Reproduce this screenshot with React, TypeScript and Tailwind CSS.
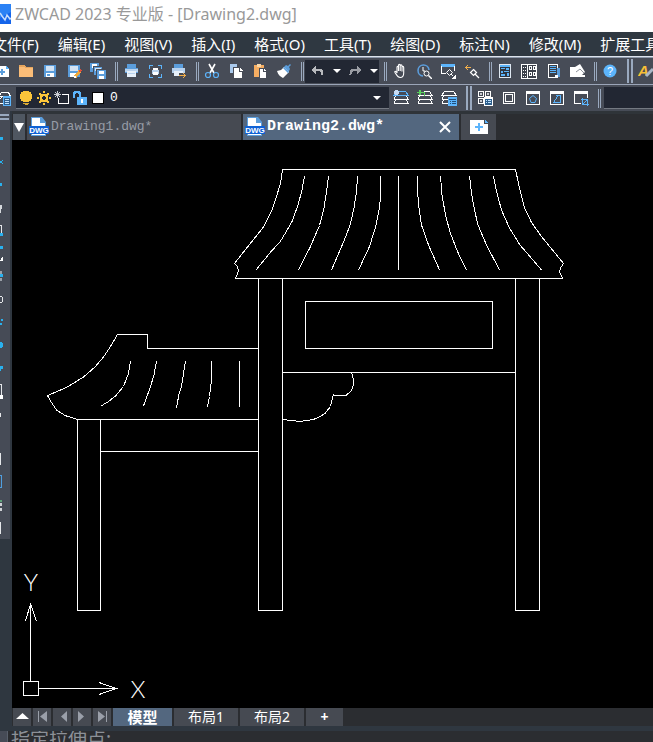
import type { ReactNode } from 'react'

const MENUS = ['文件(F)', '编辑(E)', '视图(V)', '插入(I)', '格式(O)', '工具(T)', '绘图(D)', '标注(N)', '修改(M)', '扩展工具(X)']

const BLUE = '#5b9ddb'
const SKY = '#5cb4fb'

const ICONS: Record<string, ReactNode> = {
  new: (
    <>
      <path d="M4 3h8v3h3v8H4z" fill="#fff" />
      <path d="M12 3l3 3h-3z" fill={SKY} />
      <path d="M8 6v6M5 9h6" stroke={BLUE} strokeWidth="2" />
    </>
  ),
  open: (
    <>
      <path d="M1 2h5l2 2h7v10H1z" fill="#e5a55e" />
      <path d="M1 4h5l2 1h7v9H1z" fill="#fbbd78" />
    </>
  ),
  save: (
    <>
      <path d="M2 2h12v12H2z" fill={BLUE} />
      <path d="M4 3h8v5H4z" fill="#d3e3f4" />
      <path d="M4 10h8v4H4z" fill="#fff" />
      <path d="M5 11h3v2H5z" fill={BLUE} />
    </>
  ),
  saveAs: (
    <>
      <path d="M2 2h12v12H2z" fill={BLUE} />
      <path d="M4 3h8v5H4z" fill="#d3e3f4" />
      <path d="M4 10h6v4H4z" fill="#fff" />
      <path d="M9 14l5-6" stroke="#f0a93c" strokeWidth="3" />
      <path d="M13 9l2-2" stroke="#e04f3a" strokeWidth="2" />
      <path d="M8 13h2v2H8z" fill="#fff" />
    </>
  ),
  saveAll: (
    <>
      <path d="M0 0h9v9H0z" fill={BLUE} />
      <path d="M2 1h5v4H2z" fill="#fff" />
      <path d="M3 3h10v9H3z" fill="#474c57" />
      <path d="M4 4h8v8H4z" fill={BLUE} />
      <path d="M5 5h6v3H5z" fill="#d3e3f4" />
      <path d="M6 6h10v10H6z" fill="#474c57" />
      <path d="M7 7h9v9H7z" fill={BLUE} />
      <path d="M9 8h5v3H9zM9 13h5v3H9z" fill="#fff" />
    </>
  ),
  print: (
    <>
      <path d="M4 1h9v4H4z" fill={BLUE} />
      <path d="M2 5h13v5H2z" fill="#b8d2ee" />
      <path d="M2 5h13v1H2zM2 9h2v1H2zM13 9h2v1h-2z" fill={BLUE} />
      <path d="M4 8h9v6H4z" fill="#e7f0fa" />
      <path d="M5 10h7v1H5z" fill="#b8d2ee" />
    </>
  ),
  preview: (
    <>
      <path d="M2 2h4v1H3v3H2zM11 2h4v4h-1V3h-3zM2 11h1v3h3v1H2zM14 11h1v4h-4v-1h3z" fill={SKY} />
      <path d="M6 5h5v2H6z" fill="#fff" />
      <path d="M5 7h7v4H5z" fill="#b8d2ee" />
      <path d="M6 9h5v3H6z" fill="#fff" />
    </>
  ),
  publish: (
    <>
      <path d="M3 1h9v4H3z" fill={BLUE} />
      <path d="M1 5h13v5H1z" fill="#b8d2ee" />
      <path d="M3 8h9v5H3z" fill="#e7f0fa" />
      <path d="M8 10h7v5H8z" fill="#474c57" />
      <path d="M8 12.500h6M12 10l2.500 2.500-2.500 2.500" fill="none" stroke="#f5b04a" />
    </>
  ),
  cut: (
    <g shapeRendering="auto">
      <path d="M5 1l5 9M11 1l-5 9" stroke="#fff" strokeWidth="1.600" />
      <circle cx="4" cy="12" r="2.500" fill="none" stroke={SKY} strokeWidth="1.200" />
      <circle cx="12" cy="12" r="2.500" fill="none" stroke={SKY} strokeWidth="1.200" />
    </g>
  ),
  copy: (
    <>
      <path d="M2 1h7v9H2z" fill="#a9c9ec" />
      <path d="M5 4h10v11H5z" fill="#474c57" />
      <path d="M6 5h5v4h3v6H6z" fill="#fff" />
      <path d="M12 5l3 3h-3z" fill="#fff" />
    </>
  ),
  paste: (
    <>
      <path d="M2 2h10v12H2z" fill="#f5ad62" />
      <path d="M5 1h4v3H5z" fill="#fbd9a8" />
      <path d="M7 5h8v10H7z" fill="#474c57" />
      <path d="M8 6h3v3h3v6H8z" fill="#fff" />
      <path d="M12 6l2 2h-2z" fill="#fff" />
    </>
  ),
  brush: (
    <g shapeRendering="auto">
      <path d="M8 4l2-2 2 1 2-2 1 1-2 2 1 2-2 4z" fill={BLUE} />
      <path d="M1 8l4-1 3-3 5 5-6 6c-2-1-5-3-6-7z" fill="#fff" />
      <path d="M7.500 4.500l5 5" stroke={BLUE} strokeWidth="1.500" />
    </g>
  ),
  undo: <path d="M1 7l5-4.500V5.500h3c3 0 4.500 2 4.500 6h-2c0-2-1-3.500-3-3.500H6v3.500z" fill="#b7b9bd" />,
  redo: <path d="M15 7l-5-4.500V5.500H7c-3 0-4.500 2-4.500 6h2c0-2 1-3.500 3-3.500H10v3.500z" fill="#9a9da4" />,
  pan: (
    <path
      d="M5 10V4.500c0-1.500 1.500-1.500 1.500 0V8 2.500c0-1.500 1.700-1.500 1.700 0V8 3c0-1.500 1.800-1.500 1.800 0v5.500V4.500c0-1.500 1.700-1.500 1.700 0V10c0 3-1 4.500-3.500 4.500C5.500 14.500 5 13 3 9.500c-.8-1.300.8-2 2 .5z"
      fill="none"
      stroke="#fff"
      strokeWidth="1.100"
      shapeRendering="auto"
    />
  ),
  zoomRealtime: (
    <g fill="none" shapeRendering="auto">
      <path d="M7 13A5.500 5.500 0 1 1 13 7" stroke={BLUE} strokeWidth="1.600" />
      <path d="M7 4v4h2" stroke="#fff" />
      <circle cx="10.500" cy="10.500" r="2.500" stroke="#fff" />
      <path d="M12.500 12.500L16 16" stroke="#fff" strokeWidth="1.500" />
    </g>
  ),
  zoomWindow: (
    <>
      <path d="M1 1h14v3H1z" fill={SKY} />
      <path d="M1.500 3v7.500H6M14.500 3v5" fill="none" stroke="#fff" />
      <path d="M9.500 6.500l3 3-3 3-3-3zM11 11l2 2" fill="none" stroke="#fff" shapeRendering="auto" />
      <path d="M16 11v5h-5z" fill="#fff" />
    </>
  ),
  zoomPrev: (
    <>
      <path d="M1 4h6v1H1zM2 3h1v3H2zM3 2h1v1H3zM3 6h1v1H3z" fill="#f5b04a" />
      <path d="M9.500 6.500l3 3-3 3-3-3zM11 11l4 4" fill="none" stroke="#fff" strokeWidth="1.200" shapeRendering="auto" />
    </>
  ),
  properties: (
    <>
      <path d="M2 1h12v14H2z" fill="#dfe8f2" />
      <path d="M3 4h10v10H3z" fill="#2f3540" />
      <path d="M3 2h10v2H3z" fill={SKY} />
      <path d="M4 5h4v1H4zM9 5h3v2H9zM4 8h2v2H4zM7 8h5v1H7zM4 11h4v2H4zM10 10h2v3h-2z" fill={SKY} />
    </>
  ),
  designCenter: (
    <>
      <path d="M0 1h16v15H0z" fill="#fff" />
      <path d="M1 2h5v13H1zM7 2h8v13H7z" fill="#3b404a" />
      <path d="M2 4.500h3M2 7.500h3M2 10.500h3M2 13.500h3" stroke="#fff" strokeDasharray="1 1" />
      <path d="M8.500 3.500h2v3h-2zM12.500 3.500h2v3h-2zM8.500 9.500h2v3h-2zM12.500 9.500h2v3h-2z" fill="none" stroke="#fff" />
    </>
  ),
  toolPalette: (
    <>
      <path d="M3.500 1.500h9v13h-9z" fill="#3b404a" stroke="#fff" />
      <path d="M5 3h6v1H5zM5 5h6v1H5zM5 7h6v1H5zM5 9h6v1H5z" fill={SKY} />
      <path d="M12 5h3v9h-3z" fill={BLUE} />
      <path d="M10 12h3v3h-3z" fill="#fff" />
    </>
  ),
  sheet: (
    <g shapeRendering="auto">
      <path d="M1 4h7v8h8v2H1z" fill="#fff" />
      <path d="M6 4l5-3 5 8-4 4-5-1z" fill="#fff" />
      <path d="M7 9l4-3 4 4" fill="none" stroke="#8d929b" />
    </g>
  ),
  help: (
    <g shapeRendering="auto">
      <circle cx="8" cy="8" r="6.500" fill={SKY} />
      <text x="8" y="12" textAnchor="middle" fontSize="11" fontFamily="Liberation Sans, sans-serif" fill="#fff">
        ?
      </text>
    </g>
  ),
  textStyle: (
    <g shapeRendering="auto">
      <text x="0" y="13" fontSize="15" fontWeight="700" fontStyle="italic" fontFamily="Liberation Sans, sans-serif" fill="#f7bf36">
        A
      </text>
      <path d="M8 13l7-7" stroke="#a9b6c6" strokeWidth="3" />
    </g>
  ),
  layerManager: (
    <>
      <path d="M2.500 6.500l3-4h7l2 4zM2.500 10.500l3-3M2.500 13.500h5" fill="none" stroke="#fff" />
      <path d="M7 6h8v10H7z" fill={SKY} />
      <path d="M8 8h6v7H8z" fill="#2f5f8c" />
      <path d="M9 9h4v1H9zM9 11h4v1H9zM9 13h4v1H9z" fill="#bfe2ff" />
    </>
  ),
  layerCurrent: (
    <>
      <path d="M0.500 5.500h15L12.500 1.500h-9z" fill="#474c57" stroke={SKY} />
      <path d="M0.500 9.500h15l-2-3M0.500 9.500l2-3M0.500 13.500h15l-2-3M0.500 13.500l2-3" fill="none" stroke="#fff" />
      <circle cx="3.500" cy="2.500" r="2.500" fill="#c6dbf3" />
    </>
  ),
  layerPrev: (
    <>
      <path d="M7 1.500h5.500l2.500 4H1" fill="none" stroke="#fff" />
      <path d="M0.500 9.500h15l-2-3M0.500 9.500l2-3M0.500 13.500h15l-2-3M0.500 13.500l2-3" fill="none" stroke="#fff" />
      <path d="M0 2h8v4H7V3H0zM2 0h2v5H2z" fill="#58cf5c" />
    </>
  ),
  layerStates: (
    <>
      <path d="M0.500 5.500l3-4h9l3 4zM0.500 9.500l2-3M0.500 9.500H7M0.500 13.500l2-3M0.500 13.500H7" fill="none" stroke="#fff" />
      <path d="M7 7h9v9H7z" fill={SKY} />
      <path d="M8 9.500h7M9 11.500h1M11 11.500h4M9 13.500h1M11 13.500h4" stroke="#1f4f7d" />
    </>
  ),
  blocks: (
    <>
      <path d="M1.500 1.500h5v5h-5zM8.500 1.500h5v5h-5zM1.500 8.500h5v5h-5z" fill="none" stroke="#fff" />
      <path d="M3 3h2v2H3zM10 3h2v2h-2zM3 10h2v2H3z" fill="#c9ccd2" />
      <path d="M7 7h9v9H7z" fill="#fff" />
      <path d="M8 9h7v6H8z" fill="#2f5f8c" />
      <path d="M9 10.500h1M11 10.500h3M9 12.500h1M11 12.500h3" stroke="#bfe2ff" />
    </>
  ),
  frame: <path d="M2.500 2.500h11v11h-11zM4.500 4.500h7v7h-7z" fill="none" stroke="#fff" />,
  polygonView: (
    <>
      <path d="M1.500 2.500h13v12h-13z" fill="none" stroke="#fff" />
      <path d="M1 1h14v3H1z" fill="#fff" />
      <path d="M8 5.500l3.500 3-1.500 4H6l-1.500-4z" fill="none" stroke={SKY} shapeRendering="auto" />
    </>
  ),
  objectView: (
    <>
      <path d="M1.500 2.500h13v12h-13z" fill="none" stroke="#fff" />
      <path d="M1 1h14v3H1z" fill="#fff" />
      <path d="M7 5.500h4.500v7H4.500l4-6" fill="none" stroke={SKY} />
    </>
  ),
  clipView: (
    <>
      <path d="M8 13.500H1.500v-11h13V8" fill="none" stroke="#fff" />
      <path d="M1 1h14v3H1z" fill="#fff" />
      <path d="M9.500 8v6.500H16M8 9.500h6.500V16M10 14l4-4" fill="none" stroke={SKY} />
    </>
  ),
  bulb: (
    <>
      <path d="M5 1h6v1h2v2h1v5h-1v2h-2v1H5v-1H3V9H2V4h1V2h2z" fill="#fbc53a" />
      <path d="M5 13h6v1H5zM7 14h3v1H7z" fill="#d9a934" />
    </>
  ),
  sun: (
    <>
      <path d="M6 5h4v1h1v4h-1v1H6v-1H5V6h1z" fill="none" stroke="#fbc53a" strokeWidth="2" />
      <path d="M7 1h2v2H7zM7 13h2v2H7zM1 7h2v2H1zM13 7h2v2h-2zM3 3h2v2H3zM11 3h2v2h-2zM3 11h2v2H3zM11 11h2v2h-2z" fill="#fbc53a" />
    </>
  ),
  viewport: (
    <>
      <path d="M8 4.500h6.500v9H4.500V8" fill="none" stroke="#fff" />
      <path d="M3.500 1v7M0 4.500h7M1 2l5 5M6 2L1 7" stroke="#c9ccd2" />
    </>
  ),
  unlock: (
    <>
      <path d="M2 8V3h1V2h4v1h1v5" fill="none" stroke={SKY} strokeWidth="2" />
      <path d="M5 7h10v8H5z" fill={SKY} />
      <path d="M9 9h2v4H9z" fill="#fff" />
    </>
  ),
}

function Icon({ name }: { name: string }) {
  return (
    <svg viewBox="0 0 16 16" className="size-4 shrink-0" shapeRendering="crispEdges" aria-hidden="true">
      {ICONS[name]}
    </svg>
  )
}

function ToolButton({ name }: { name: string }) {
  return (
    <button type="button" aria-label={name} className="flex h-6 w-6 shrink-0 items-center justify-center">
      <Icon name={name} />
    </button>
  )
}

// thin double line between icon groups
function Divider() {
  return <div className="ml-[5px] mr-px h-[19px] w-[3px] shrink-0 border-x border-[#9aa9bf]" />
}

// heavier grip where one toolbar ends and the next begins
function Grip() {
  return <div className="ml-[5px] mr-px h-6 w-[6px] shrink-0 border-x-2 border-[#9aa9bf]" />
}

function Caret() {
  return <span className="h-0 w-0 shrink-0 border-x-4 border-t-4 border-x-transparent border-t-white" />
}

function Toolbar({ names }: { names: string[] }) {
  return (
    <div className="flex shrink-0">
      {names.map((n) => (
        <ToolButton key={n} name={n} />
      ))}
    </div>
  )
}

function DwgIcon() {
  return (
    <svg viewBox="0 0 20 20" className="size-5 shrink-0" aria-hidden="true">
      <path d="M2 0h11l4 5v14H2z" fill={BLUE} />
      <path d="M3 1h8v5h5v12H3z" fill="#fff" />
      <path d="M0 9h20v8H0z" fill="#0f62d6" />
      <text x="10" y="16" textAnchor="middle" fontSize="8" fontWeight="700" fontFamily="Liberation Sans, sans-serif" fill="#fff">
        DWG
      </text>
    </svg>
  )
}

// right-hand edges of the draw tools, docked half off screen
const DRAW_TOOLS: { label: string; art: ReactNode }[] = [
  { label: 'line', art: <path d="M0 6h3v3H0z" fill="#29b1ee" /> },
  { label: 'xline', art: <path d="M0 7h2v2H0zM2 6h1v1H2zM2 9h1v1H2z" fill="#29b1ee" /> },
  { label: 'polyline', art: <path d="M0 6h2v3H0z" fill="#29b1ee" /> },
  { label: 'polygon', art: <path d="M0 5h2v4H1v4H0z" fill="#d5d8dc" /> },
  {
    label: 'rectangle',
    art: (
      <>
        <path d="M0 2h2v8H1V3H0z" fill="#e5e7ea" />
        <path d="M0 10h3v3H0z" fill="#29b1ee" />
      </>
    ),
  },
  {
    label: 'arc',
    art: (
      <>
        <path d="M0 0h3v3H0z" fill="#29b1ee" />
        <path d="M3 10v5H0z" fill="#fff" />
      </>
    ),
  },
  {
    label: 'circle',
    art: (
      <>
        <path d="M0 3h2v3H0zM0 10h2v3H0z" fill="#9aa0a8" />
        <path d="M0 6h3v3H0z" fill="#29b1ee" />
      </>
    ),
  },
  { label: 'revcloud', art: <path d="M0 5h2v1h1v5H2v1H0v-1h2V6H0z" fill="#e5e7ea" /> },
  { label: 'spline', art: <path d="M1 5h2v2H1zM0 9h2v2H0z" fill="#29b1ee" /> },
  { label: 'ellipse', art: <path d="M0 5h2v1h1v4H2v1H0z" fill="#29b1ee" /> },
  { label: 'ellipse arc', art: <path d="M0 6h3v3H1v2H0z" fill="#29b1ee" /> },
  {
    label: 'insert',
    art: (
      <>
        <path d="M0 1h2v11H1V2H0z" fill="#e5e7ea" />
        <path d="M0 12h3v4H0z" fill="#fff" />
      </>
    ),
  },
  { label: 'point', art: <path d="M0 8h1v4H0z" fill="#e5e7ea" /> },
  { label: 'hatch', art: null },
  { label: 'gradient', art: <path d="M0 2h1v12H0z" fill="#e5e7ea" /> },
  { label: 'region', art: <path d="M0 1h2v13H0v-1h1V2H0z" fill="#4f9fe0" /> },
  {
    label: 'table',
    art: (
      <>
        <path d="M0 3h2v2H0z" fill="#5da17a" />
        <path d="M0 6h2v3H0zM0 11h2v3H0z" fill="#cfd2d6" />
      </>
    ),
  },
  { label: 'mtext', art: <path d="M0 3h1v12H0z" fill="#e5e7ea" /> },
]

// main roof, tile lines included
const CURVES = [
  '282.5,169.5 280.5,183 277,195 272,210 263.5,227 253.5,239.500 243.5,252 234.5,263.5 237,266 238.5,271 235.5,278.5',
  '304.5,176 302,190 298,205 292,221.5 286,232 280,242 271.5,251 256,270',
  '328.5,176 327,188 324,208 319.5,225.5 310,247.5 298.5,270',
  '357.5,176 356.5,191.5 354,208 350,225.5 343.5,242 331.5,270',
  '380.5,176 380.5,198 379,210 376,225.5 369.5,246.5 358.5,270',
  '398.5,176 398.5,270',
  '417.5,176 417.5,191.5 419,208 421.5,225 428.5,245 439.5,270',
  '440.5,176 442,195 445.5,215 450,232 457.5,251.5 466.5,270',
  '469.5,176 471.5,193 474.5,210 478,225 486.5,245 499.5,270',
  '493.5,176 496.5,191.5 501.5,210 509.5,228 520,245 541.5,270',
  '515.5,169.5 519.5,188 524.5,207.5 531.5,222.5 541.5,236.5 563.5,263.5 560.5,268 559.5,271.5 562.5,278.5',
  // side roof
  '258.5,348.5 147.5,348.5 147.5,334.5 117.5,334.5 110.5,346.5 103.5,357 95,367 83.5,377 66.5,387.5 47.5,395.5 51.5,402.5 56.5,410 65,415.5 77.5,419.5',
  '130.5,361 128.5,373.5 123.5,386.5 116,395.5 108.5,401.5 101,406',
  '156.5,361 154,375 150,388 143.5,406',
  '185.5,361 181.5,386.5 179,394 176.5,408',
  '211.5,361 211.5,380 209.5,396.5 207.5,407',
  '239.5,361 239.5,407',
  // scroll bracket
  '282.5,419.5 300,421.5 313.5,419.5 319,417 325,413.5 330.5,406.5 333.5,394.5 335,395.5 346,395.5 351.5,390.5 353.5,385 353.5,379.5 351.5,372.5',
]

function Drawing() {
  return (
    <svg width="641" height="568" viewBox="12 140 641 568" className="shrink-0" fill="none" stroke="#fff" role="img" aria-label="Drawing2.dwg">
      <g shapeRendering="crispEdges">
        <path d="M282 169.500H516M235 278.500H563" />
        <path d="M258.500 278V610.500H282.500V278M515.500 278V610.500H539.500V278" />
        <path d="M305.500 301.500H492.500V348.500H305.500zM282 372.500H516" />
        <path d="M77 419.500H258M100 451.500H258M77.500 419V610.500H100.500V419" />
        {CURVES.map((points) => (
          <polyline key={points} points={points} />
        ))}
        {/* UCS icon */}
        <path d="M23.500 681.500H38.500V695.500H23.500zM30.500 681V603M38 688.500H117" />
        <path d="M25.500 621L30.500 604L36.500 621M99 682.500L116.500 688.500L99 694.500" />
      </g>
      <g fill="#fff" stroke="none" fontFamily="Lato, sans-serif" fontWeight="300" fontSize="24" textAnchor="middle">
        <text x="31" y="591">Y</text>
        <text x="138" y="698">X</text>
      </g>
    </svg>
  )
}

const NAV_SHAPES = [
  { label: 'layout list', d: 'M3 11h13L9.500 5z', fill: '#fff' },
  { label: 'first layout', d: 'M5 3h1v11H5zM14 3v11L7 8.500z', fill: '#9a9fa9' },
  { label: 'previous layout', d: 'M14 3v11L8 8.500z', fill: '#9a9fa9' },
  { label: 'next layout', d: 'M5 3v11l6-5.500z', fill: '#9a9fa9' },
  { label: 'last layout', d: 'M5 3v11l7-5.500zM13 3h1v11h-1z', fill: '#9a9fa9' },
]

export default function App() {
  return (
    <div className="flex h-screen w-full flex-col overflow-hidden bg-[#2b2d31] font-['Noto_Sans','Noto_Sans_CJK_SC',sans-serif]">
      {/* Title bar */}
      <header className="flex h-8 shrink-0 items-center gap-1 bg-white pb-1 text-[16px] text-[#999999]">
        <svg viewBox="0 0 11 20" className="h-5 w-[11px] shrink-0" aria-hidden="true">
          <path d="M0 0h11v20H0z" fill="#1464ea" />
          <path d="M0 0h11v8L0 14z" fill="#2b82f5" />
          <path d="M0 9l2 3 3 4 2-5 3 4 1-1" fill="none" stroke="#c6defd" strokeWidth="1.500" />
        </svg>
        <h1 className="whitespace-nowrap">ZWCAD 2023 专业版 - [Drawing2.dwg]</h1>
      </header>

      {/* Menu bar */}
      <nav className="-ml-2 flex h-[25px] shrink-0 items-center gap-[19px] border-b border-[#dde3ec] bg-[#2f3841] text-[15px] text-white">
        {MENUS.map((m) => (
          <button key={m} type="button" className="shrink-0 whitespace-nowrap">
            {m}
          </button>
        ))}
      </nav>

      {/* Standard toolbar */}
      <div className="flex h-7 shrink-0 items-center border-b border-t border-b-[#9ba5b8] border-t-[#8f9aab] bg-[#474c57]">
        <div className="-ml-2.5 flex items-center">
          <Toolbar names={['new', 'open', 'save', 'saveAs', 'saveAll']} />
          <Divider />
          <Toolbar names={['print', 'preview', 'publish']} />
          <Divider />
          <Toolbar names={['cut', 'copy', 'paste', 'brush']} />
          <Divider />
          <div className="flex h-[23px] w-[74px] shrink-0 items-center justify-around bg-[#222733]">
            <ToolButton name="undo" />
            <Caret />
            <ToolButton name="redo" />
            <Caret />
          </div>
          <Divider />
          <Toolbar names={['pan', 'zoomRealtime', 'zoomWindow', 'zoomPrev']} />
          <Divider />
          <Toolbar names={['properties', 'designCenter', 'toolPalette', 'sheet']} />
          <Divider />
          <Toolbar names={['help']} />
          <Grip />
          <Toolbar names={['textStyle']} />
        </div>
      </div>

      {/* Layer toolbar */}
      <div className="flex h-[26px] shrink-0 items-center bg-[#474c57]">
        <div className="-ml-2 flex min-w-0 flex-1 items-center">
          <ToolButton name="layerManager" />
          <div className="flex h-[22px] w-[373px] shrink-0 items-center gap-0.5 border-b border-[#747982] bg-[#222733] px-0.5">
            <Icon name="bulb" />
            <Icon name="sun" />
            <Icon name="viewport" />
            <Icon name="unlock" />
            <span className="mx-0.5 size-3 shrink-0 border border-black bg-white" />
            <select aria-label="图层" className="min-w-0 flex-1 appearance-none bg-transparent pl-0.5 font-['Liberation_Mono',monospace] text-[13px] text-white">
              <option>0</option>
            </select>
            <span className="mr-1.5 flex">
              <Caret />
            </span>
          </div>
          <Toolbar names={['layerCurrent', 'layerPrev', 'layerStates']} />
          <Grip />
          <Toolbar names={['blocks', 'frame', 'polygonView', 'objectView', 'clipView']} />
          <Divider />
          <select aria-label="视图" className="ml-0.5 h-[22px] min-w-0 flex-1 appearance-none border-b border-[#747982] bg-[#222733]" />
        </div>
      </div>

      <div className="flex min-h-0 flex-1 bg-[#2f3740]">
        {/* Draw toolbar */}
        <aside className="mr-0.5 flex h-[428px] w-2.5 shrink-0 flex-col bg-[#464b56]">
          <div className="mb-2 mt-[3px] h-[6px] w-[9px] shrink-0 border-y-2 border-[#9aa9bf]" />
          {DRAW_TOOLS.map((t) => (
            <button key={t.label} type="button" aria-label={t.label} className="flex min-h-0 flex-1 items-center">
              <svg viewBox="0 0 4 16" className="h-4 w-1 shrink-0" shapeRendering="crispEdges" aria-hidden="true">
                {t.art}
              </svg>
            </button>
          ))}
        </aside>

        <main className="flex min-w-0 flex-1 flex-col">
          {/* File tabs */}
          <div className="flex h-[29px] shrink-0 gap-0.5 border-t-[3px] border-[#2f3439] bg-[#2b2d31] pl-px font-['Liberation_Mono',monospace]">
            <button type="button" aria-label="文件列表" className="flex w-3 shrink-0 items-center justify-center bg-[#4f5761]">
              <span className="h-0 w-0 border-x-[5px] border-t-[9px] border-x-transparent border-t-white" />
            </button>
            <button type="button" className="flex w-[214px] shrink-0 items-center gap-0.5 bg-[#464a52] pl-0.5 text-[13px] text-[#969ca6]">
              <DwgIcon />
              Drawing1.dwg*
            </button>
            <div className="flex w-[216px] shrink-0 items-center bg-[#53677f] pl-0.5 pr-2 text-white">
              <button type="button" className="flex flex-1 items-center gap-0.5 text-[15px] font-bold">
                <DwgIcon />
                Drawing2.dwg*
              </button>
              <button type="button" aria-label="关闭">
                <svg viewBox="0 0 12 12" className="size-3" aria-hidden="true">
                  <path d="M1 1l10 10M11 1L1 11" stroke="#fff" strokeWidth="2" />
                </svg>
              </button>
            </div>
            <button type="button" aria-label="新建" className="flex w-[35px] shrink-0 items-center justify-center bg-[#464a52]">
              <svg viewBox="0 0 18 14" className="h-3.5 w-[18px]" shapeRendering="crispEdges" aria-hidden="true">
                <path d="M0 0h14v4h4v10H0z" fill="#fff" />
                <path d="M15 0l3 3h-3z" fill={SKY} />
                <path d="M9 3v8M5 7h8" stroke={SKY} strokeWidth="2" />
              </svg>
            </button>
          </div>

          {/* Model space */}
          <div className="flex min-h-0 flex-1 items-end overflow-hidden bg-black">
            <Drawing />
          </div>

          {/* Layout tabs */}
          <div className="flex h-[18px] shrink-0 gap-0.5 bg-[#2b2d31] pl-px text-[14px] leading-[18px] text-white">
            {NAV_SHAPES.map((n) => (
              <button key={n.label} type="button" aria-label={n.label} className="w-[18px] shrink-0 bg-[#464a52]">
                <svg viewBox="0 0 18 18" className="size-[18px]" aria-hidden="true">
                  <path d={n.d} fill={n.fill} />
                </svg>
              </button>
            ))}
            <button type="button" className="w-[59px] shrink-0 bg-[#53677f] text-[15px] font-bold">模型</button>
            <button type="button" className="w-16 shrink-0 bg-[#464a52]">布局1</button>
            <button type="button" className="w-16 shrink-0 bg-[#464a52]">布局2</button>
            <button type="button" className="w-[37px] shrink-0 bg-[#464a52] font-bold">+</button>
          </div>
        </main>
      </div>

      {/* Command line */}
      <footer className="flex h-4 shrink-0 overflow-hidden border-t-[5px] border-[#2f3740] bg-[#2b2d31] text-[19px] leading-4 text-[#8b9097]">
        <span className="mr-[3px] w-2 shrink-0 border-r border-[#59606b] bg-[#464b56]" />
        <p className="whitespace-nowrap">指定拉伸点:</p>
      </footer>
    </div>
  )
}
